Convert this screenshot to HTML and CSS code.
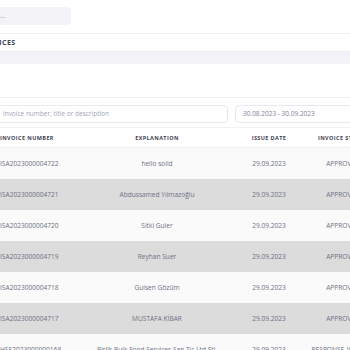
FILE: index.html
```html
<!DOCTYPE html>
<html>
<head>
<meta charset="utf-8">
<link rel="stylesheet" href="styles.css">
</head>
<body>
<div class="page">
  <div class="topbar">
    <div class="top-search">Search...</div>
  </div>
  <div class="title-row"><span class="title">INVOICES</span></div>
  <div class="band"></div>
  <div class="spacer"></div>
  <div class="card">
    <div class="filters">
      <div class="input search">invoice number, title or description</div>
      <div class="input date">30.08.2023 - 30.09.2023</div>
    </div>
    <div class="table">
      <div class="row head">
        <div class="c1">INVOICE NUMBER</div>
        <div class="c2">EXPLANATION</div>
        <div class="c3">ISSUE DATE</div>
        <div class="c4">INVOICE STATUS</div>
      </div>
      <div class="row">
        <div class="c1">ISA2023000004722</div>
        <div class="c2">hello solid</div>
        <div class="c3">29.09.2023</div>
        <div class="c4">APPROVED</div>
      </div>
      <div class="row alt">
        <div class="c1">ISA2023000004721</div>
        <div class="c2">Abdussamed Yılmazoğlu</div>
        <div class="c3">29.09.2023</div>
        <div class="c4">APPROVED</div>
      </div>
      <div class="row">
        <div class="c1">ISA2023000004720</div>
        <div class="c2">Sitki Guler</div>
        <div class="c3">29.09.2023</div>
        <div class="c4">APPROVED</div>
      </div>
      <div class="row alt">
        <div class="c1">ISA2023000004719</div>
        <div class="c2">Reyhan Suer</div>
        <div class="c3">29.09.2023</div>
        <div class="c4">APPROVED</div>
      </div>
      <div class="row">
        <div class="c1">ISA2023000004718</div>
        <div class="c2">Gulsen Gözüm</div>
        <div class="c3">29.09.2023</div>
        <div class="c4">APPROVED</div>
      </div>
      <div class="row alt">
        <div class="c1">ISA2023000004717</div>
        <div class="c2">MUSTAFA KİBAR</div>
        <div class="c3">29.09.2023</div>
        <div class="c4">APPROVED</div>
      </div>
      <div class="row">
        <div class="c1">HSE2023000000168</div>
        <div class="c2">Birlik Bulk Food Services San.Tic.Ltd.Sti.</div>
        <div class="c3">29.09.2023</div>
        <div class="c4">RESPONSE_WAITING</div>
      </div>
    </div>
  </div>
</div>
</body>
</html>
```

FILE: styles.css
```css
html, body {
  margin: 0;
  padding: 0;
  background: #ffffff;
  overflow: hidden;
}
body {
  font-family: "Open Sans", "Liberation Sans", sans-serif;
  color: #5e6278;
}
.page {
  margin-left: -30px;
  width: 440px;
}
.topbar {
  height: 26px;
  padding-top: 7px;
  border-bottom: 1px solid #f0f0f4;
}
.top-search {
  box-sizing: border-box;
  width: 101px;
  height: 18px;
  padding-left: 10px;
  background: #f4f4f8;
  border-radius: 4px;
  font-size: 6.5px;
  line-height: 18px;
  color: #a1a5b7;
}
.title-row {
  height: 17px;
  display: flex;
  align-items: center;
  padding-left: 9px;
  border-bottom: 1px solid #eeeef3;
}
.title {
  font-size: 7px;
  font-weight: 700;
  letter-spacing: 0.5px;
  color: #3f4254;
}
.band {
  height: 12px;
  background: #f2f2f7;
}
.spacer {
  height: 33px;
  border-bottom: 1px solid #f1f1f4;
}
.card {
  padding-top: 7px;
}
.filters {
  display: flex;
  gap: 7px;
  height: 18px;
}
.input {
  flex-shrink: 0;
  height: 16px;
  border: 1px solid #e8e9ef;
  border-radius: 4px;
  font-size: 6.5px;
  line-height: 16px;
  color: #a1a5b7;
  box-sizing: content-box;
}
.search {
  width: 224px;
  padding-left: 32px;
}
.date {
  width: 160px;
  padding-left: 7px;
  color: #7e8299;
}
.table {
  margin-top: 4px;
  border-top: 1px solid #f1f1f4;
}
.row {
  display: grid;
  grid-template-columns: 120px 134px 90px 58px;
  height: 31px;
  align-items: center;
  background: #fafafa;
  font-size: 6.6px;
  color: #6e7184;
}
.row.alt {
  background: #dcdcdc;
}
.row.head {
  height: 19px;
  background: #ffffff;
  border-bottom: 1px solid #eeeef2;
  font-size: 5.5px;
  font-weight: 700;
  letter-spacing: 0.4px;
  color: #3f4254;
}
.row > div {
  display: flex;
  justify-content: center;
  white-space: nowrap;
}
.row > .c1 {
  justify-content: flex-start;
  padding-left: 30px;
}
```
